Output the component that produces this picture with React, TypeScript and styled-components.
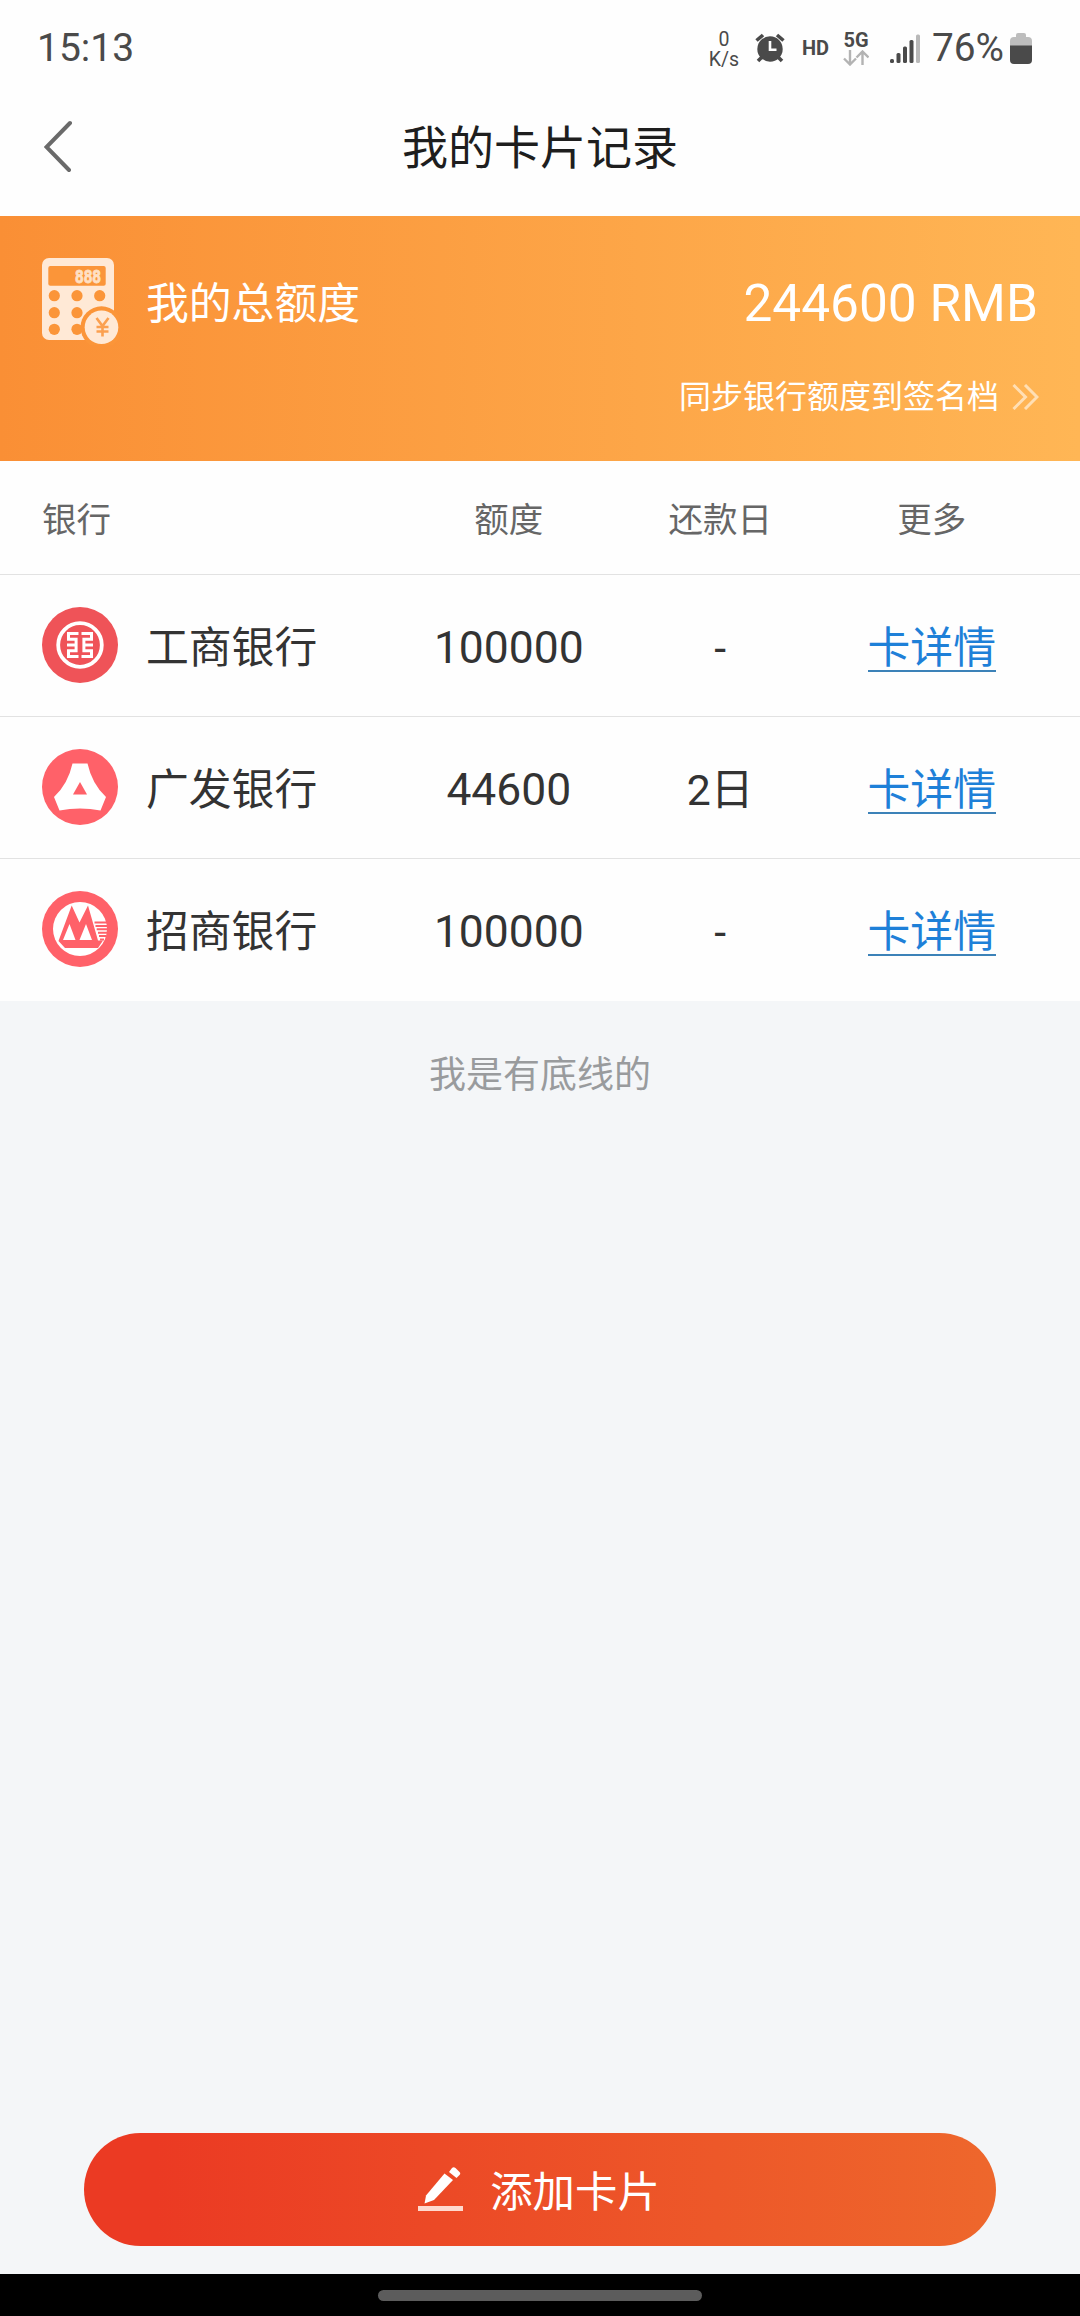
import React from "react";
import styled, { createGlobalStyle } from "styled-components";

const GlobalStyle = createGlobalStyle`
  * { box-sizing: border-box; }
  body {
    margin: 0;
    background: #f4f6f8;
    font-family: Roboto, "Noto Sans CJK SC", sans-serif;
  }
`;

const Screen = styled.div`
  width: 1080px;
  height: 2316px;
  display: flex;
  flex-direction: column;
  background: #f4f6f8;
`;

const StatusBar = styled.div`
  height: 96px;
  flex: none;
  background: #fefefe;
  display: flex;
  align-items: center;
  justify-content: space-between;
  padding: 0 48px 0 37px;
  color: #4a4a4a;
`;

const Clock = styled.div`
  font-size: 39px;
  line-height: 46px;
`;

const StatusIcons = styled.div`
  display: flex;
  align-items: center;
`;

const NetSpeed = styled.div`
  width: 32px;
  display: flex;
  flex-direction: column;
  align-items: center;
  font-size: 19.5px;
  line-height: 20px;
  margin: 3px 15px 0 0;
`;

const HdLabel = styled.div`
  font-size: 20px;
  font-weight: 700;
  margin-left: 17px;
  width: 26px;
`;

const Network = styled.div`
  display: flex;
  flex-direction: column;
  align-items: center;
  width: 28px;
  margin: 0 20px 0 14px;
  font-size: 20px;
  line-height: 20px;
  font-weight: 700;
`;

const Percent = styled.div`
  font-size: 38.8px;
  line-height: 46px;
  margin: 0 6px 0 12px;
`;

const TitleBar = styled.header`
  height: 120px;
  flex: none;
  background: #fefefe;
  display: grid;
  grid-template-columns: 100px 1fr 100px;
  align-items: center;
  padding-bottom: 16px;
`;

const Back = styled.button`
  border: 0;
  background: none;
  padding: 0 0 0 44px;
  margin-bottom: 4px;
  height: 54px;
  display: flex;
`;

const Title = styled.h1`
  margin: 0;
  text-align: center;
  font-size: 46px;
  font-weight: 400;
  line-height: 60px;
  color: #1e1e1e;
`;

const Banner = styled.section`
  height: 245px;
  flex: none;
  background: linear-gradient(90deg, #fa8f35, #ffb655);
  padding: 42px 42px 0 42px;
  color: #fff;
`;

const TotalRow = styled.div`
  display: flex;
  align-items: center;
  height: 87px;
`;

const TotalLabel = styled.div`
  margin-left: 27px;
  padding-top: 4px;
  font-size: 42.8px;
  line-height: 60px;
  flex: 1;
`;

const TotalAmount = styled.div`
  padding-top: 4px;
  font-size: 51.4px;
  line-height: 60px;
`;

const SyncRow = styled.div`
  display: flex;
  align-items: center;
  justify-content: flex-end;
  gap: 13px;
  margin: 28px -1px 0 0;
  font-size: 32px;
  line-height: 48px;
`;

const Table = styled.section`
  background: #fefefe;
  flex: none;
`;

const Row = styled.div<{ $head?: boolean }>`
  display: grid;
  grid-template-columns: 361px repeat(3, 211.5px);
  align-items: center;
  padding: 0 0 2px 42px;
  height: ${(p) => (p.$head ? 114 : 142)}px;
  border-bottom: 1px solid #e2e2e2;
  font-size: ${(p) => (p.$head ? 34.5 : 42.8)}px;
  color: ${(p) => (p.$head ? "#666" : "#333")};
  &:last-child { border-bottom-color: transparent; }
`;

const Cell = styled.div<{ $left?: boolean }>`
  text-align: ${(p) => (p.$left ? "left" : "center")};
  line-height: 60px;
  padding-top: 6px;
`;

const Figure = styled.span`
  font-size: 44.4px;
`;

const BankCell = styled.div`
  display: flex;
  align-items: center;
  gap: 28px;
`;

const DetailLink = styled.a`
  display: inline-block;
  height: 48px;
  color: #1e80d8;
  line-height: 48px;
  border-bottom: 2px solid #3c82b8;
`;

const EndNote = styled.p`
  margin: 47px 0 0;
  text-align: center;
  font-size: 37px;
  line-height: 56px;
  color: #999b9d;
  flex: 1;
`;

const AddButton = styled.button`
  flex: none;
  height: 113px;
  margin: 0 84px 28px;
  padding: 0 2px 2px 0;
  border: 0;
  border-radius: 57px;
  background: linear-gradient(90deg, #eb3a23 8%, #ee672c);
  color: #fff;
  font-family: inherit;
  font-size: 42.4px;
  display: flex;
  align-items: center;
  justify-content: center;
  gap: 27px;
`;

const NavBar = styled.div`
  height: 42px;
  flex: none;
  background: #000;
  display: flex;
  justify-content: center;
  padding-top: 16px;
`;

const Handle = styled.div`
  width: 324px;
  height: 11px;
  border-radius: 6px;
  background: #5c5c5c;
`;

const AlarmIcon = () => (
  <svg width="30" height="30" viewBox="0 0 30 30" fill="#4a4a4a">
    <circle cx="15" cy="16" r="12.7" />
    <g stroke="#4a4a4a" strokeWidth="3.6">
      <path d="M1.500 7.500 8 2M28.500 7.500 22 2" />
      <path d="m3 28 4-4M27 28l-4-4" />
    </g>
    <path d="M15 8v8.7h6.5" fill="none" stroke="#fefefe" strokeWidth="2.6" />
  </svg>
);

const DataArrows = () => (
  <svg width="26" height="16" viewBox="0 0 26 16" fill="none" stroke="#b3b3b3" strokeWidth="2.4">
    <path d="M7 0v14M1 8.500l6 6 6-6" />
    <path d="M19.500 15V1.500M13.500 7.500l6-6 6 6" />
  </svg>
);

const SignalIcon = () => (
  <svg width="30" height="34" viewBox="0 0 30 34" fill="#4a4a4a">
    <rect x="0" y="28" width="4" height="4" rx="1.500" />
    <rect x="6.500" y="22" width="4" height="10" rx="1.500" />
    <rect x="13" y="15.500" width="4" height="16.500" rx="1.500" />
    <rect x="19.500" y="9" width="4" height="23" rx="1.500" />
    <rect x="26" y="3.500" width="4" height="28.500" rx="1.500" fill="#b9b9b9" />
  </svg>
);

const BatteryIcon = () => (
  <svg width="22" height="31" viewBox="0 0 22 31">
    <path d="M6 4V2q0-2 2-2h6q2 0 2 2v2h2q4 0 4 4v5H0V8q0-4 4-4z" fill="#bdbdbd" />
    <path d="M0 12.500h22V27q0 4-4 4H4q-4 0-4-4z" fill="#4a4a4a" />
  </svg>
);

const BackIcon = () => (
  <svg width="30" height="54" viewBox="0 0 30 54" fill="none" stroke="#6a6a6a" strokeWidth="4" strokeLinecap="round">
    <path d="M26 4 2.500 28 25 51" />
  </svg>
);

const CalculatorIcon = () => (
  <svg width="77" height="87" viewBox="0 0 77 87">
    <rect width="72" height="82" rx="7" fill="#ffe9d6" />
    <rect x="6.300" y="8" width="57.400" height="19.700" rx="2" fill="#fb9539" />
    <text x="33" y="25" fontSize="18" fontWeight="700" fill="#ffe0c4" stroke="#ffe0c4" strokeWidth="0.800" textLength="26" lengthAdjust="spacingAndGlyphs">888</text>
    {[37.7, 54.7, 71.3].map((y) =>
      [12.3, 35, 57.7].map((x) => <circle key={`${x}-${y}`} cx={x} cy={y} r="5.600" fill="#fb9539" />)
    )}
    <circle cx="59.500" cy="69.300" r="21" fill="#fb9539" />
    <circle cx="59.500" cy="69.300" r="16.800" fill="#ffe9d6" />
    <path d="m54.500 60 6 8 6-8M60.500 68V78.500M54.500 69h12M54.500 73.500h12" fill="none" stroke="#fba050" strokeWidth="2.600" />
  </svg>
);

const DoubleChevron = () => (
  <svg width="27" height="26" viewBox="0 0 27 26" fill="none" stroke="#ffdfb4" strokeWidth="3">
    <path d="m1.500 1 12 12-12 12M13 1l12 12-12 12" />
  </svg>
);

const PencilIcon = () => (
  <svg width="45" height="44" viewBox="0 0 45 44" fill="#fff">
    <path d="M6.500 36.500 8 28.500 26.500 6.500l8.500 6.500-19 20z" />
    <path d="m31 5 3-4q1.500-1.500 3.500 0l4 4q1.500 1.500 0 3L38.500 11z" />
    <rect y="39" width="45" height="5" fill="#ffd9ce" />
  </svg>
);

const IcbcLogo = () => (
  <svg width="76" height="76" viewBox="0 0 76 76">
    <circle cx="38" cy="38" r="38" fill="#ef5358" />
    <circle cx="38" cy="38" r="21.800" fill="none" stroke="#fff" strokeWidth="3.800" />
    <g fill="none" stroke="#fff" strokeWidth="3">
      <path d="M36.500 26.600H26.500v5.700h7.600v11.400h-7.600v5.700h10M25 38h9.200" />
      <path d="M39.500 26.600h10v5.700h-7.600v11.400h7.600v5.700h-10M51 38h-9.200" />
    </g>
  </svg>
);

const CgbLogo = () => (
  <svg width="76" height="76" viewBox="0 0 76 76">
    <circle cx="38" cy="38" r="38" fill="#ff6169" />
    <path d="M30.500 14.500h15Q50 35 64 48l-5.500 13.500q-20.500-4-41 0L12 48Q26 35 30.500 14.500z" fill="#fff" />
    <path d="m38 33 7 12.500H31z" fill="#ff6169" />
  </svg>
);

const CmbLogo = () => (
  <svg width="76" height="76" viewBox="0 0 76 76">
    <circle cx="38" cy="38" r="38" fill="#ff6169" />
    <circle cx="38" cy="38" r="27" fill="#fff" />
    <path d="M29.700 14.500 16.500 50l6.500 7h33l5-7.500h-5L46 14.500l-8.500 17z" fill="#ff6169" />
    <path d="m27.500 33-6.500 16h12.500zM44 33l-6.500 16H50z" fill="#fff" />
    <path d="M52.500 31.500h12.500M53.500 34.900h11.500M54.700 38.300H65M56 41.700h9M57 45.100h7M58 48.500h4" stroke="#ff6169" strokeWidth="2" />
  </svg>
);

const banks = [
  { name: "工商银行", logo: <IcbcLogo />, amount: "100000", day: "-" },
  { name: "广发银行", logo: <CgbLogo />, amount: "44600", day: "2日" },
  { name: "招商银行", logo: <CmbLogo />, amount: "100000", day: "-" },
];

export default function App() {
  return (
    <Screen>
      <GlobalStyle />
      <StatusBar>
        <Clock>15:13</Clock>
        <StatusIcons>
          <NetSpeed>
            <span>0</span>
            <span>K/s</span>
          </NetSpeed>
          <AlarmIcon />
          <HdLabel>HD</HdLabel>
          <Network>5G<DataArrows /></Network>
          <SignalIcon />
          <Percent>76%</Percent>
          <BatteryIcon />
        </StatusIcons>
      </StatusBar>
      <TitleBar>
        <Back aria-label="返回"><BackIcon /></Back>
        <Title>我的卡片记录</Title>
      </TitleBar>
      <Banner>
        <TotalRow>
          <CalculatorIcon />
          <TotalLabel>我的总额度</TotalLabel>
          <TotalAmount>244600 RMB</TotalAmount>
        </TotalRow>
        <SyncRow>同步银行额度到签名档<DoubleChevron /></SyncRow>
      </Banner>
      <Table>
        <Row $head>
          <Cell $left>银行</Cell>
          <Cell>额度</Cell>
          <Cell>还款日</Cell>
          <Cell>更多</Cell>
        </Row>
        {banks.map((b) => (
          <Row key={b.name}>
            <BankCell>
              {b.logo}
              <Cell $left>{b.name}</Cell>
            </BankCell>
            <Cell><Figure>{b.amount}</Figure></Cell>
            <Cell>{b.day}</Cell>
            <Cell><DetailLink>卡详情</DetailLink></Cell>
          </Row>
        ))}
      </Table>
      <EndNote>我是有底线的</EndNote>
      <AddButton><PencilIcon />添加卡片</AddButton>
      <NavBar><Handle /></NavBar>
    </Screen>
  );
}
